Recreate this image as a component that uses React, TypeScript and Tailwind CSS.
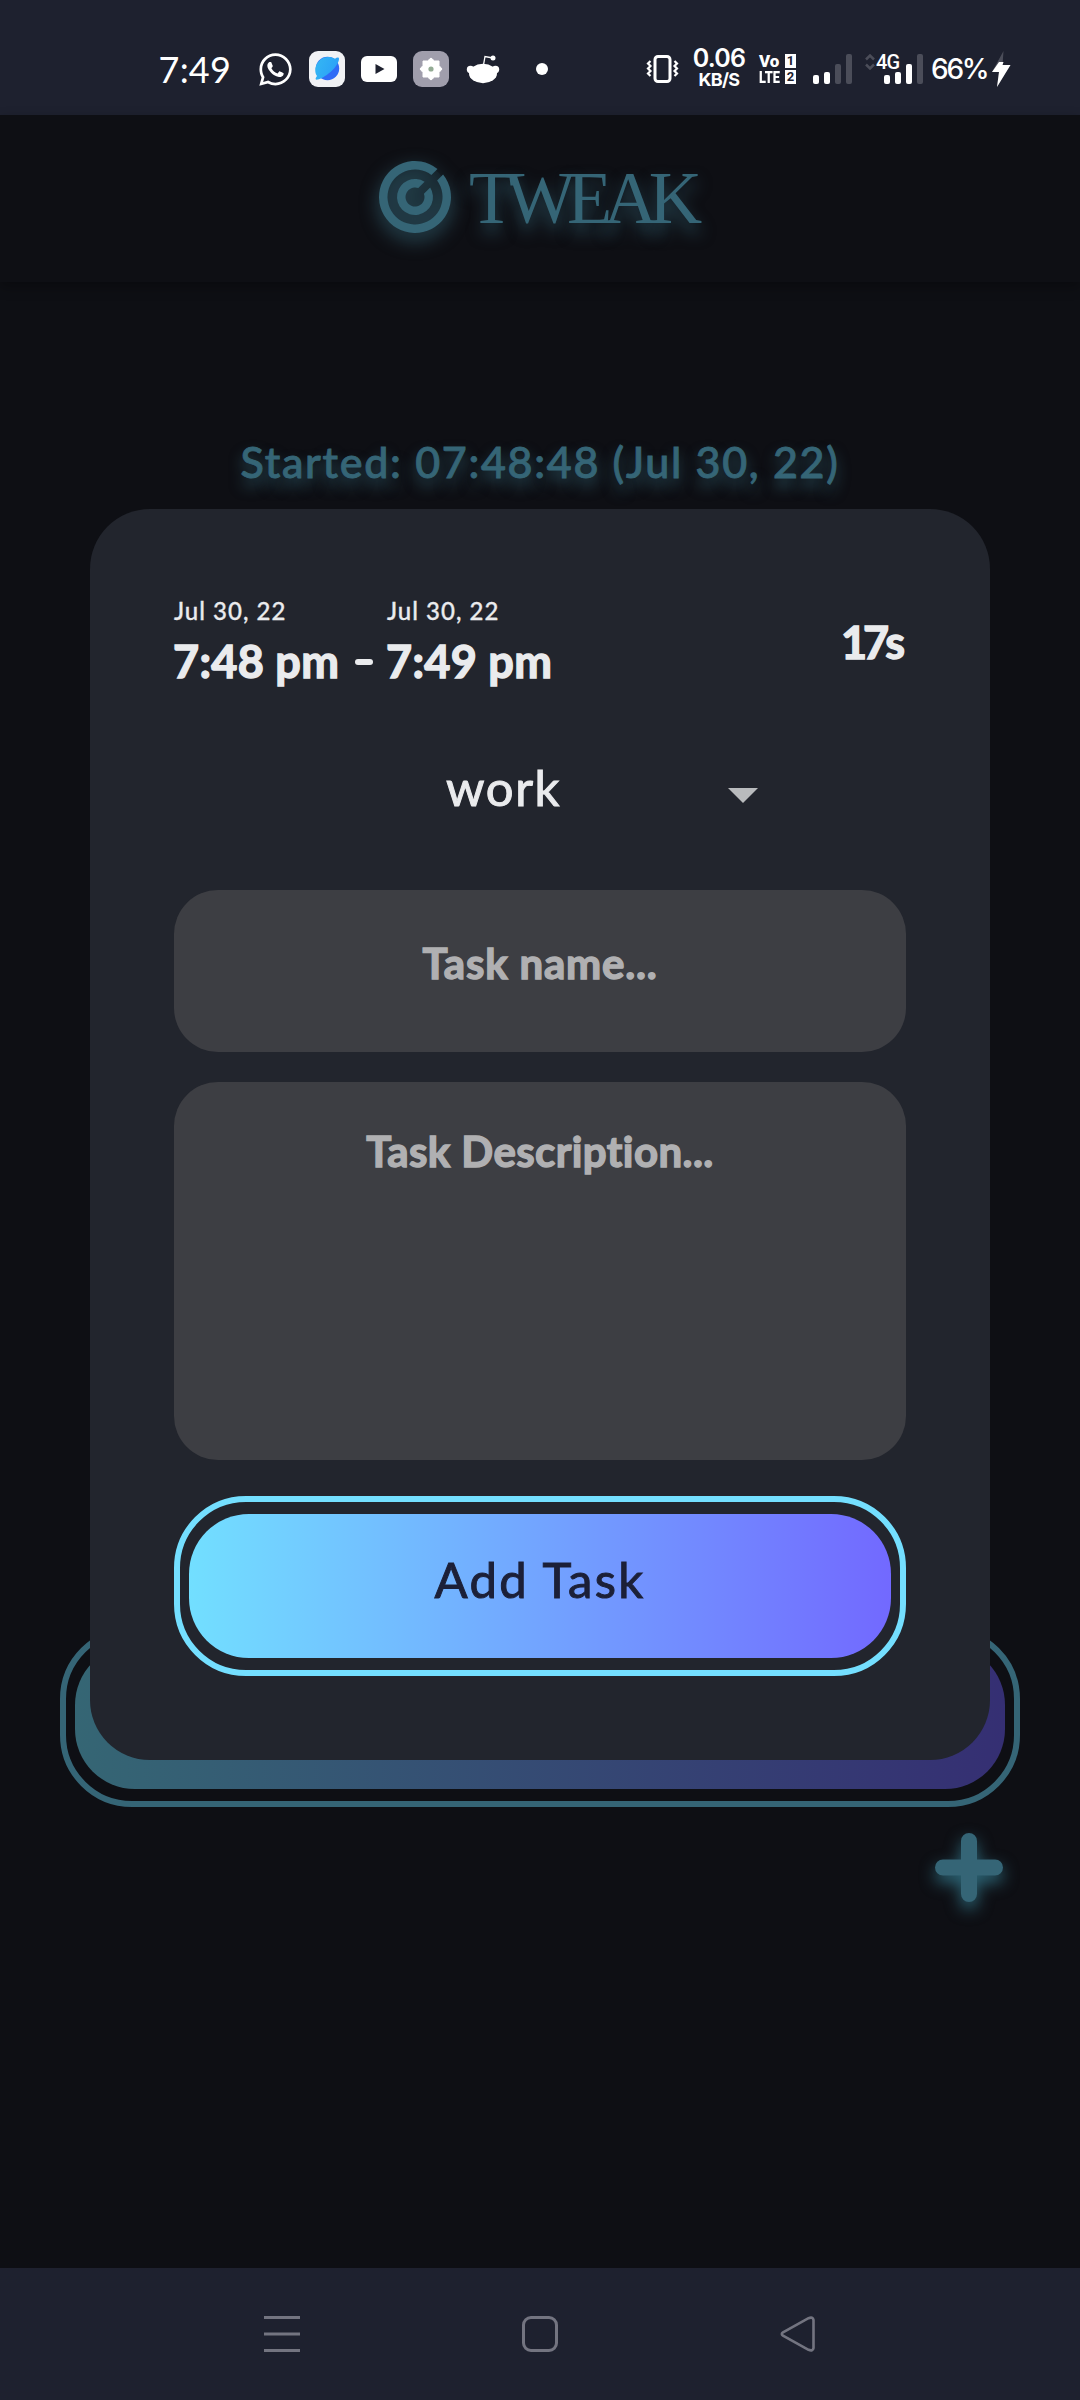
import React from "react";
import { FaWhatsapp } from "react-icons/fa";

function SignalBars({ strong }: { strong: number }) {
  const bars = ["h-[9px]", "h-[12px]", "h-[20px]", "h-[30px]"];
  return (
    <div className="flex h-[30px] items-end gap-[5px]">
      {bars.map((h, i) => (
        <span key={h} className={`w-[6px] rounded-[2px] ${h} ${i < strong ? "bg-white" : "bg-[#4b4d59]"}`} />
      ))}
    </div>
  );
}

function StatusBar() {
  return (
    <div className="flex h-[115px] items-center bg-[#1e212f] pt-[23px] text-white">
      <div className="flex h-[92px] w-[231px] items-center justify-end pb-[1px] text-[36px] leading-[40px] tracking-[0.2px] [font-family:Lato,sans-serif]">
        7:49
      </div>
      <FaWhatsapp className="ml-[26px] h-[37px] w-[37px]" />
      <svg className="ml-[15px] h-[36px] w-[36px]" viewBox="0 0 36 36">
        <defs>
          <linearGradient id="planet" x1="0" y1="0" x2="1" y2="0.4">
            <stop offset="0" stopColor="#35b8f3" />
            <stop offset="1" stopColor="#2ba1f7" />
          </linearGradient>
        </defs>
        <rect width="36" height="36" rx="9" fill="#f1f2f5" />
        <circle cx="18.5" cy="17.5" r="11.7" fill="#2f6bf6" />
        <path d="M8 25C3 17 10 6 19 6c3 0 5 .6 7 1.700 2-1.700 4-1.700 4 0 0 7-12 18-21 20.800-3 .7-3-1-1-3.500z" fill="url(#planet)" />
      </svg>
      <svg className="ml-[16px] h-[26px] w-[36px]" viewBox="0 0 36 26">
        <rect width="36" height="26" rx="6" fill="#fff" />
        <path d="M14.500 8v10l9-5z" fill="#1e212f" />
      </svg>
      <svg className="ml-[16px] h-[36px] w-[36px]" viewBox="0 0 36 36">
        <rect width="36" height="36" rx="9" fill="#a09eac" />
        <path
          d="M18 7l3.500 3h4.500v4.500l3 3.500-3 3.500v4.500h-4.500l-3.500 3-3.500-3h-4.500v-4.500l-3-3.500 3-3.500v-4.500h4.500z"
          fill="#fff"
          stroke="#fff"
          strokeLinejoin="round"
        />
        <circle cx="18" cy="18" r="2.600" fill="#93ab94" />
      </svg>
      <svg className="ml-[17px] h-[30px] w-[34px]" viewBox="0 0 34 30">
        <ellipse cx="17" cy="19.500" rx="14" ry="9.700" fill="#fff" />
        <circle cx="4.500" cy="15.500" r="3.700" fill="#fff" />
        <circle cx="29.500" cy="15.500" r="3.700" fill="#fff" />
        <path d="M17.500 11l1.500-8.500 8 1.500" fill="none" stroke="#fff" strokeWidth="1.300" />
        <circle cx="27" cy="4" r="2.500" fill="#fff" />
      </svg>
      <span className="ml-[36px] h-[12px] w-[12px] rounded-full bg-white" />

      <svg className="ml-[98px] h-[28px] w-[33px]" viewBox="0 0 33 28" fill="none" stroke="#fff">
        <rect x="9" y="1.500" width="15" height="25" rx="3" strokeWidth="3" />
        <path d="M4.500 6L2 8.500 4.500 11 2 13.500 4.500 16 2 18.500 4.500 21M28.500 6l2.500 2.500-2.500 2.500 2.500 2.500-2.500 2.500 2.500 2.500-2.500 2.500" strokeWidth="2.200" />
      </svg>
      <div className="ml-[12px] flex w-[56px] flex-col items-center whitespace-nowrap [font-family:Inter,sans-serif]">
        <span className="text-[25px] font-semibold leading-[19px] tracking-[-0.8px]">0.06</span>
        <span className="mt-[3px] text-[18px] font-bold leading-[18px] tracking-[-0.7px]">KB/S</span>
      </div>
      <div className="ml-[12px] flex w-[37px] flex-col gap-[2px] font-bold [font-family:Roboto,sans-serif]">
        <div className="flex h-[14px] items-center justify-between">
          <span className="w-[22px] text-[17px] font-black leading-[14px]">Vo</span>
          <span className="flex h-[14px] w-[11px] items-center justify-center bg-white text-[13px] leading-[14px] text-[#1e212f]">1</span>
        </div>
        <div className="flex h-[14px] items-center justify-between">
          <span className="block w-[22px] origin-left scale-x-[0.75] whitespace-nowrap text-[17px] font-black leading-[14px]">
            LTE
          </span>
          <span className="flex h-[14px] w-[11px] items-center justify-center bg-white text-[13px] leading-[14px] text-[#1e212f]">2</span>
        </div>
      </div>
      <div className="ml-[17px]">
        <SignalBars strong={2} />
      </div>
      <div className="relative ml-[32px]">
        <SignalBars strong={3} />
        <div className="absolute -left-[19px] top-[0px] flex items-center gap-[1px]">
          <svg className="h-[16px] w-[10px]" viewBox="0 0 10 16" fill="none" stroke="#4b4d59" strokeWidth="2.500">
            <path d="M1 5.500l4-4 4 4M1 10.500l4 4 4-4" />
          </svg>
          <span className="text-[20px] font-medium leading-[15px] tracking-[-0.900px] [font-family:Roboto,sans-serif]">4G</span>
        </div>
      </div>
      <span className="ml-[8px] w-[56px] whitespace-nowrap text-[28px] font-medium leading-[30px] tracking-[-2.200px] [font-family:Inter,sans-serif]">
        66%
      </span>
      <svg className="ml-[4px] h-[36px] w-[21px]" viewBox="0 0 21 36">
        <path d="M12.500 0L1 21h7L6 36l13.500-22h-8z" fill="#4b4d59" />
        <path d="M8 11L1 21h7L6 36l13.500-22h-8l1-3z" fill="#fff" />
      </svg>
    </div>
  );
}

function Header() {
  return (
    <header className="flex h-[167px] items-start bg-[#0e0f14] pl-[375px] pt-[42px] text-[#356576] shadow-[0_5px_12px_rgba(0,0,0,0.3)]">
      <svg className="h-[80px] w-[80px] overflow-visible drop-shadow-[0_7px_9px_rgba(53,101,118,0.8)]" viewBox="-40 -40 80 80" fill="#356576">
        <circle r="34" fillOpacity="0.12" />
        <path d="M22.500 -28.100A36 36 0 1 0 28.100 -22.500L22.100 -16.400A27.500 27.500 0 1 1 16.400 -22.100Z" />
        <path d="M9.600 -15.200A18 18 0 1 0 15.200 -9.600L8.900 -3.300A9.500 9.500 0 1 1 3.300 -8.900Z" />
      </svg>
      <span className="ml-[14px] mt-[1px] text-[74px] leading-[80px] tracking-[-8.500px] [font-family:'Liberation_Serif',serif] [text-shadow:0_9px_16px_rgba(53,101,118,0.7)]">
        TWEAK
      </span>
    </header>
  );
}

function TimePoint({ date, time }: { date: string; time: string }) {
  return (
    <div className="flex flex-col whitespace-nowrap">
      <span className="text-[24px] font-medium leading-[30px] tracking-[1px] [-webkit-text-stroke:0.3px_#eaebed]">{date}</span>
      <span className="-ml-[1px] mt-[10px] text-[45px] font-bold leading-[50px] tracking-[0.3px] [-webkit-text-stroke:1.400px_#eaebed]">{time}</span>
    </div>
  );
}

function TaskCard() {
  return (
    <section className="relative z-10 mx-[90px] h-[1251px] rounded-[60px] bg-[#22252d] px-[84px] text-[#eaebed]">
      <div className="flex h-[230px] items-start pt-[87px]">
        <div className="w-[181px]">
          <TimePoint date="Jul 30, 22" time="7:48 pm" />
        </div>
        <span className="mt-[63px] h-[6px] w-[18px] rounded-full bg-[#eaebed]" />
        <div className="ml-[14px]">
          <TimePoint date="Jul 30, 22" time="7:49 pm" />
        </div>
        <span className="ml-auto mr-[5px] mt-[21px] text-[45px] font-bold leading-[50px] tracking-[-4px] [-webkit-text-stroke:1.400px_#eaebed]">
          17s
        </span>
      </div>
      <div className="flex h-[151px] items-start">
        <span className="ml-[272px] mt-[18px] w-[282px] text-[49px] leading-[60px] tracking-[1.600px] [-webkit-text-stroke:1px_#eaebed]">
          work
        </span>
        <svg className="mt-[49px] h-[15px] w-[30px]" viewBox="0 0 30 15">
          <path d="M0 0h30L15 15z" fill="#b9bbbd" />
        </svg>
      </div>
      <div className="flex h-[162px] items-start justify-center rounded-[44px] bg-[#3d3e43] pt-[47px] text-[42px] font-bold leading-[52px] tracking-[0.8px] text-[#b0b0b2] [-webkit-text-stroke:1.400px_#b0b0b2]">
        Task name...
      </div>
      <div className="mt-[30px] flex h-[378px] items-start justify-center rounded-[44px] bg-[#3d3e43] pt-[43px] text-[42px] font-bold leading-[52px] tracking-[0.4px] text-[#b0b0b2] [-webkit-text-stroke:1.400px_#b0b0b2] [font-variant-ligatures:none]">
        Task Description...
      </div>
      <div className="mt-[36px] h-[180px] rounded-[72px] border-[6px] border-[#74dfff] px-[9px] py-[12px]">
        <button className="flex h-full w-full items-center justify-center rounded-[60px] bg-linear-to-r/srgb from-[#72dfff] to-[#7269ff] pb-[14px] text-[49px] leading-[60px] tracking-[2.300px] text-[#1c2038] [-webkit-text-stroke:1px_#1c2038]">
          Add Task
        </button>
      </div>
    </section>
  );
}

function AddButton() {
  return (
    <button className="ml-[927px] mt-[18px] block">
      <svg className="h-[84px] w-[84px] overflow-visible drop-shadow-[0_7px_8px_rgba(53,125,145,0.8)]" viewBox="0 0 84 84">
        <path d="M42 16v53M16 42.500h52" stroke="#356576" strokeWidth="16" strokeLinecap="round" />
      </svg>
    </button>
  );
}

function NavBar() {
  return (
    <nav className="flex h-[132px] items-start bg-[#1e212f] pt-[48px]">
      <svg className="ml-[264px] h-[36px] w-[36px]" viewBox="0 0 36 36" stroke="#737480" strokeWidth="3">
        <path d="M0 1.500h36M0 18h36M0 34.500h36" />
      </svg>
      <span className="ml-[222px] h-[36px] w-[36px] rounded-[9px] border-[3px] border-[#737480]" />
      <svg className="ml-[222px] h-[36px] w-[36px]" viewBox="0 0 36 36" fill="none" stroke="#737480" strokeWidth="2.600">
        <path d="M3 16.300L28.500 2.200Q33 .5 33.500 4V32Q33 35.500 28.500 33.800L3 19.700Q.6 18 3 16.300Z" />
      </svg>
    </nav>
  );
}

export default function App() {
  return (
    <div className="flex h-[2400px] w-[1080px] flex-col overflow-hidden bg-[#0e0f14] [font-family:Lato,sans-serif]">
      <StatusBar />
      <Header />
      <main className="flex-1">
        <h1 className="flex h-[227px] items-start justify-center pt-[154px] text-[43px] font-medium leading-[52px] tracking-[1.700px] text-[#356576] [-webkit-text-stroke:0.9px_#356576] [text-shadow:0_8px_14px_rgba(53,101,118,0.8)]">
          Started: 07:48:48 (Jul 30, 22)
        </h1>
        <TaskCard />
        <div className="mx-[60px] -mt-[133px] h-[180px] rounded-[72px] border-[6px] border-[#356576] px-[9px] py-[12px]">
          <div className="h-full rounded-[60px] bg-linear-to-r/srgb from-[#356674] to-[#352f73]" />
        </div>
        <AddButton />
      </main>
      <NavBar />
    </div>
  );
}
